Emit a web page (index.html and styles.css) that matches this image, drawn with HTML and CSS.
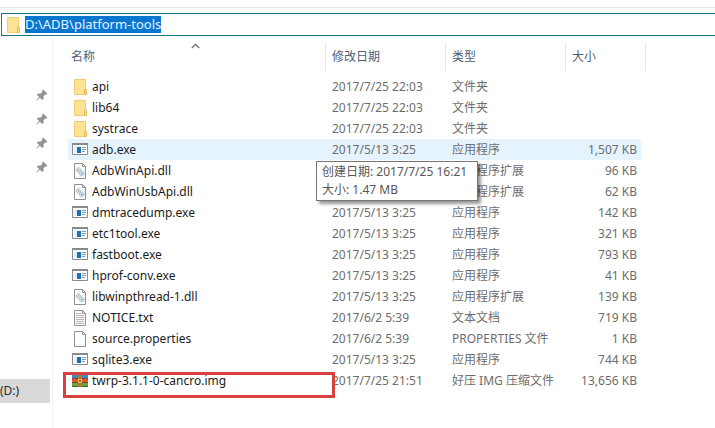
FILE: index.html
```html
<!DOCTYPE html>
<html lang="zh-CN">
<head>
<meta charset="utf-8">
<title>platform-tools</title>
<link rel="stylesheet" href="styles.css">
</head>
<body>
<svg class="sprite" aria-hidden="true">
  <symbol id="folder" viewBox="0 0 16 16">
    <path d="M2.500 .5h11v15h-11z" fill="#ffe394" stroke="#efcd72"/>
    <path d="M12.500 10.500h2v5h-2z" fill="#fbdc85" stroke="#e6bf5c"/>
  </symbol>
  <symbol id="exe" viewBox="0 0 16 16">
    <path d="M.5 2.500h15v10H.5z" fill="#fff" stroke="#858b91"/>
    <path d="M0 1h16v2H0z" fill="#858b91"/>
    <path d="M2 4h3v7H2z" fill="#e6edf3"/>
    <path d="M5 5h4v6H5z" fill="#1673b8"/>
    <path d="M10 5.500h4M10 7.500h4M10 9.500h3" stroke="#8297a9"/>
  </symbol>
  <symbol id="page" viewBox="0 0 16 16">
    <path d="M2.500 .5h8l3 3v12h-11z" fill="#fdfdfd" stroke="#909090"/>
    <path d="M10.500 .5v3h3" fill="none" stroke="#909090"/>
  </symbol>
  <symbol id="dll" viewBox="0 0 16 16">
    <use href="#page"/>
    <circle cx="6.500" cy="7" r="2.300" fill="#e4eef3" stroke="#9baeb9" stroke-dasharray="1.200 .5"/>
    <circle cx="6.500" cy="7" r=".8" fill="#71838e"/>
    <circle cx="9.800" cy="10.500" r="2.300" fill="#d7eaf4" stroke="#8db0c4" stroke-dasharray="1.200 .5"/>
    <circle cx="9.800" cy="10.500" r=".8" fill="#64879c"/>
  </symbol>
  <symbol id="txt" viewBox="0 0 16 16">
    <use href="#page"/>
    <path d="M4 3.500h5M4 5.500h8M4 7.500h8M4 9.500h8M4 11.500h8M4 13.500h8" stroke="#b4b4b4"/>
  </symbol>
  <symbol id="archive" viewBox="0 0 16 16">
    <path d="M0 2h16v4H0z" fill="#3b8ac4"/>
    <path d="M0 6h16v4H0z" fill="#e0582e"/>
    <path d="M0 10h16v4H0z" fill="#69a83c"/>
    <path d="M0 13.500h16" stroke="#3f6330"/>
    <path d="M0 5.500h16M0 9.500h16" stroke="#7d4a35"/>
    <path d="M6 2h4v12H6z" fill="#b07a35"/>
    <path d="M6 6h4v4H6z" fill="#f0c34a"/>
    <path d="M7 7h2v2H7z" fill="#a0672b"/>
  </symbol>
  <symbol id="pin" viewBox="0 0 12 12">
    <path d="M7.200 .6l4.200 4.200-1.200 1-1-.2L7.400 7.500l.2 2.200-1.400 1.400-2.300-2.300L1 11.400l-.6-.4 2.700-3L.8 5.700 2.200 4.400l2.300.2 1.900-1.900-.2-1z" fill="#8f959b"/>
  </symbol>
</svg>

<header class="top">
  <div class="address">
    <svg class="icon"><use href="#folder"/></svg>
    <span class="path">D:\ADB\platform-tools</span>
  </div>
</header>

<div class="body">
  <nav class="side">
    <ul class="pins">
      <li><svg class="pin"><use href="#pin"/></svg></li>
      <li><svg class="pin"><use href="#pin"/></svg></li>
      <li><svg class="pin"><use href="#pin"/></svg></li>
      <li><svg class="pin"><use href="#pin"/></svg></li>
    </ul>
    <a class="drive" href="#">(D:)</a>
  </nav>
  <main class="files">
    <table>
      <colgroup><col class="c-name"><col class="c-date"><col class="c-type"><col class="c-size"><col class="c-end"></colgroup>
      <thead>
        <tr>
          <th class="sorted">名称<svg class="caret" viewBox="0 0 9 6"><path d="M.8 5l3.700-3.700L8.200 5" fill="none" stroke="#66707a" stroke-width="1.300"/></svg></th>
          <th>修改日期</th><th>类型</th><th colspan="2">大小</th>
        </tr>
      </thead>
      <tbody>
        <tr><td class="name"><svg class="icon"><use href="#folder"/></svg>api</td><td>2017/7/25 22:03</td><td>文件夹</td><td></td><td></td></tr>
        <tr><td class="name"><svg class="icon"><use href="#folder"/></svg>lib64</td><td>2017/7/25 22:03</td><td>文件夹</td><td></td><td></td></tr>
        <tr><td class="name"><svg class="icon"><use href="#folder"/></svg>systrace</td><td>2017/7/25 22:03</td><td>文件夹</td><td></td><td></td></tr>
        <tr class="hover"><td class="name"><svg class="icon"><use href="#exe"/></svg>adb.exe<div class="tip" role="tooltip">创建日期: 2017/7/25 16:21<br>大小: 1.47 MB</div></td><td>2017/5/13 3:25</td><td>应用程序</td><td class="size">1,507 KB</td><td></td></tr>
        <tr><td class="name"><svg class="icon"><use href="#dll"/></svg>AdbWinApi.dll</td><td>2017/5/13 3:25</td><td>应用程序扩展</td><td class="size">96 KB</td><td></td></tr>
        <tr><td class="name"><svg class="icon"><use href="#dll"/></svg>AdbWinUsbApi.dll</td><td>2017/5/13 3:25</td><td>应用程序扩展</td><td class="size">62 KB</td><td></td></tr>
        <tr><td class="name"><svg class="icon"><use href="#exe"/></svg>dmtracedump.exe</td><td>2017/5/13 3:25</td><td>应用程序</td><td class="size">142 KB</td><td></td></tr>
        <tr><td class="name"><svg class="icon"><use href="#exe"/></svg>etc1tool.exe</td><td>2017/5/13 3:25</td><td>应用程序</td><td class="size">321 KB</td><td></td></tr>
        <tr><td class="name"><svg class="icon"><use href="#exe"/></svg>fastboot.exe</td><td>2017/5/13 3:25</td><td>应用程序</td><td class="size">793 KB</td><td></td></tr>
        <tr><td class="name"><svg class="icon"><use href="#exe"/></svg>hprof-conv.exe</td><td>2017/5/13 3:25</td><td>应用程序</td><td class="size">41 KB</td><td></td></tr>
        <tr><td class="name"><svg class="icon"><use href="#dll"/></svg>libwinpthread-1.dll</td><td>2017/5/13 3:25</td><td>应用程序扩展</td><td class="size">139 KB</td><td></td></tr>
        <tr><td class="name"><svg class="icon"><use href="#txt"/></svg>NOTICE.txt</td><td>2017/6/2 5:39</td><td>文本文档</td><td class="size">719 KB</td><td></td></tr>
        <tr><td class="name"><svg class="icon"><use href="#page"/></svg>source.properties</td><td>2017/6/2 5:39</td><td>PROPERTIES 文件</td><td class="size">1 KB</td><td></td></tr>
        <tr><td class="name"><svg class="icon"><use href="#exe"/></svg>sqlite3.exe</td><td>2017/5/13 3:25</td><td>应用程序</td><td class="size">744 KB</td><td></td></tr>
        <tr><td class="name"><svg class="icon"><use href="#archive"/></svg>twrp-3.1.1-0-cancro.img<span class="mark"></span></td><td>2017/7/25 21:51</td><td>好压 IMG 压缩文件</td><td class="size">13,656 KB</td><td></td></tr>
      </tbody>
    </table>
  </main>
</div>
</body>
</html>
```
FILE: styles.css
```css
* { box-sizing: border-box; }

body {
  margin: 0;
  min-height: 100vh;
  display: flex;
  flex-direction: column;
  background: #fff;
  color: #1c1c1c;
  font: 12px/20px "Noto Sans", "Noto Sans CJK SC", sans-serif;
}

.sprite { position: absolute; width: 0; height: 0; }
.icon { width: 16px; height: 16px; flex: none; }

.top { padding-top: 7px; }
.top::before {
  content: "";
  display: block;
  height: 1px;
  margin-bottom: 5px;
  background: #e3dfe2;
}
.address {
  display: flex;
  align-items: center;
  gap: 4px;
  height: 23px;
  margin-left: 1px;
  padding-left: 3px;
  border: 1px solid #1f7280;
  border-right: 0;
}
.path {
  height: 17px;
  line-height: 17px;
  background: #0a76d0;
  color: #e4f3ff;
  font-size: 13px;
}

.body { display: flex; flex: 1; }

.side {
  width: 53px;
  flex: none;
  padding-top: 47px;
  border-right: 1px solid #f3f3f3;
}
.pins { margin: 0 0 200px; padding: 0; list-style: none; }
.pins li {
  display: flex;
  align-items: center;
  justify-content: flex-end;
  height: 24px;
  padding-right: 4px;
}
.pin { width: 12px; height: 12px; }
.drive {
  display: block;
  height: 24px;
  margin-right: 2px;
  line-height: 24px;
  background: #d9d9d9;
  color: #2a2a2a;
  text-decoration: none;
}

.files { flex: 1; min-width: 0; padding: 6px 0 0 15px; }

table { table-layout: fixed; width: 578px; border-collapse: collapse; }
.c-name { width: 258px; }
.c-date, .c-type { width: 120px; }
.c-size { width: 75px; }
.c-end { width: 5px; }

th {
  position: relative;
  height: 34px;
  padding: 0 6px 4px;
  background: linear-gradient(#e4e9ec, #e4e9ec) right top / 1px 29px no-repeat;
  color: #4c607a;
  font-weight: 400;
  text-align: left;
}
th:first-child { padding-left: 3px; }
.caret {
  position: absolute;
  top: 1px;
  left: 50%;
  width: 9px;
  height: 6px;
  margin-left: -6px;
}

td {
  height: 21px;
  padding: 0 6px;
  color: #6d6d6d;
  white-space: nowrap;
}
.name {
  position: relative;
  padding-left: 4px;
  color: #1c1c1c;
}
.name .icon { margin-right: 4px; vertical-align: middle; }
.size { padding-right: 4px; text-align: right; }
.hover td:not(:last-child) { background: #e5f3ff; }

.tip {
  position: absolute;
  top: 22px;
  left: 248px;
  z-index: 2;
  min-width: 162px;
  padding: 1px 5px;
  border: 1px solid #767676;
  background: #fff;
  box-shadow: 3px 3px 3px rgba(0, 0, 0, .4);
  color: #575757;
  line-height: 18px;
}
.mark {
  position: absolute;
  top: 2px;
  left: -5px;
  z-index: 1;
  width: 272px;
  height: 26px;
  border: 3px solid #d94141;
}
```
